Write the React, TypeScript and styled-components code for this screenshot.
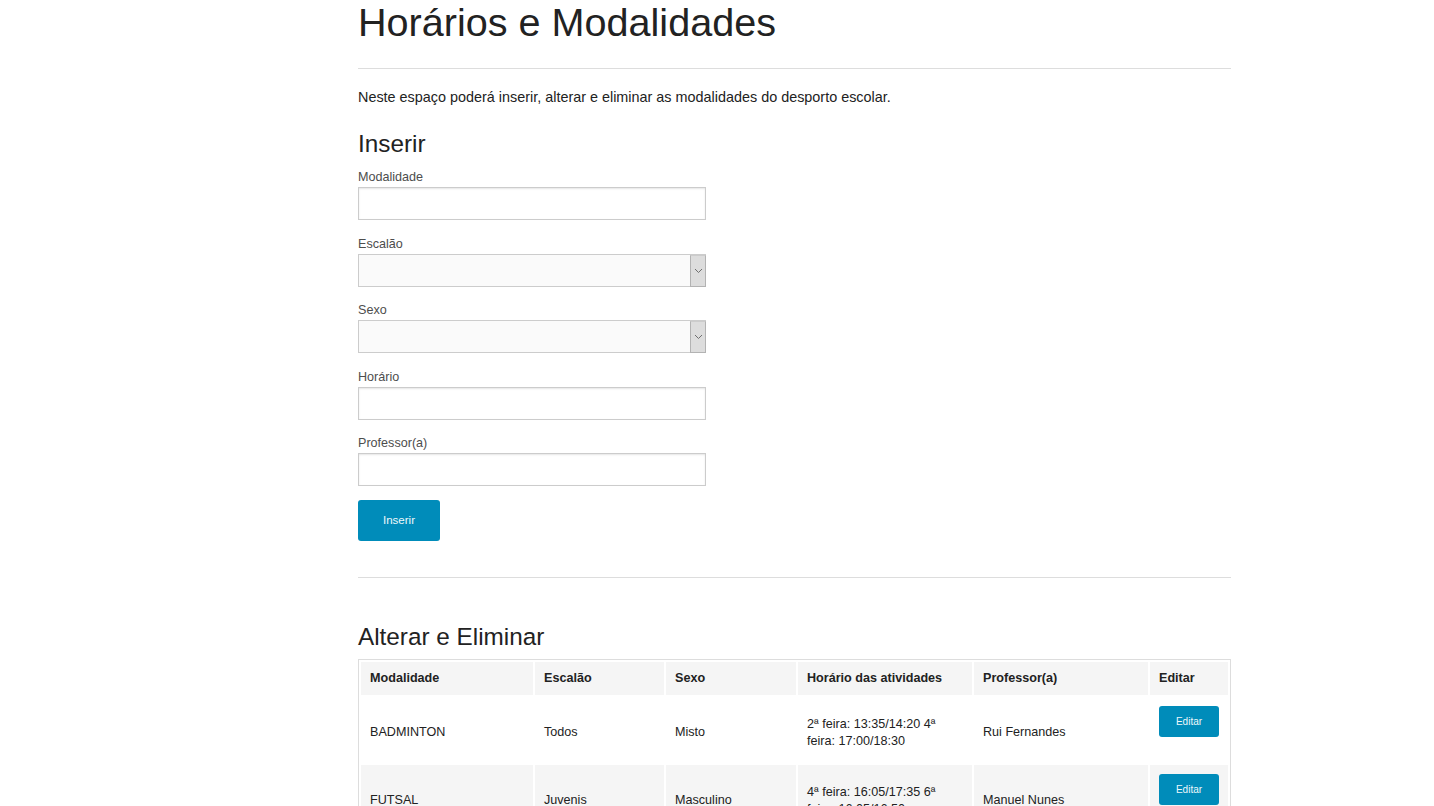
import React from "react";
import styled, { createGlobalStyle } from "styled-components";

const Global = createGlobalStyle`
  html, body { margin: 0; padding: 0; background: #fff; overflow: hidden; }
  body { font-family: "Liberation Sans", Arial, Helvetica, sans-serif; color: #222; }
  * { box-sizing: border-box; }
`;

const Page = styled.main`
  width: 873px;
  margin-left: 358px;
  display: flex;
  flex-direction: column;
`;

const Title = styled.h1`
  margin: -2px 0 0;
  font-size: 39.6px;
  line-height: 48px;
  font-weight: 400;
  color: #222;
`;

const Rule = styled.hr<{ $top: number; $bottom?: number }>`
  margin: ${(p) => p.$top}px 0 ${(p) => p.$bottom ?? 0}px;
  border: 0;
  border-top: 1px solid #ddd;
  height: 0;
`;

const Intro = styled.p`
  margin: 17px 0 0;
  font-size: 14.4px;
  line-height: 23px;
  color: #222;
`;

const SectionTitle = styled.h3<{ $top: number; $bottom: number }>`
  margin: ${(p) => p.$top}px 0 ${(p) => p.$bottom}px;
  font-size: 24.3px;
  line-height: 34px;
  font-weight: 400;
  color: #222;
`;

const Form = styled.form`
  width: 348px;
  display: flex;
  flex-direction: column;
  align-items: flex-start;
`;

const Field = styled.div`
  width: 100%;
  display: flex;
  flex-direction: column;
  margin-bottom: 14.5px;
`;

const Label = styled.label`
  display: block;
  font-size: 12.6px;
  line-height: 19px;
  color: #4d4d4d;
`;

const TextInput = styled.input`
  height: 33px;
  width: 100%;
  border: 1px solid #ccc;
  background: #fff;
  box-shadow: inset 0 1px 2px rgba(0, 0, 0, 0.1);
  padding: 0 8px;
  font-family: inherit;
  font-size: 12.6px;
  outline: none;
`;

const SelectBox = styled.div`
  height: 33px;
  display: flex;
  border: 1px solid #ccc;
  background: #fafafa;
`;

const SelectField = styled.select`
  flex: 1;
  appearance: none;
  -webkit-appearance: none;
  border: 0;
  background: transparent;
  font-family: inherit;
  font-size: 12.6px;
  outline: none;
`;

const ArrowBox = styled.span`
  width: 16px;
  margin: 0 -1px -1px 0;
  display: flex;
  align-items: center;
  justify-content: center;
  background: #ddd;
  border: 1px solid #b3b3b3;
  border-top-color: #ccc;
`;

const Button = styled.button<{ $small?: boolean }>`
  display: inline-flex;
  align-items: center;
  justify-content: center;
  width: ${(p) => (p.$small ? 60 : 82)}px;
  height: ${(p) => (p.$small ? 31 : 41)}px;
  border: 0;
  border-radius: 3px;
  background: #008cba;
  color: #eef8fb;
  font-family: inherit;
  font-size: ${(p) => (p.$small ? 10 : 11.5)}px;
  padding: 0;
  cursor: pointer;
`;

const SubmitButton = styled(Button)`
  margin-top: -1px;
`;

const Table = styled.table`
  width: 873px;
  table-layout: fixed;
  border-collapse: separate;
  border-spacing: 2px;
  border: 1px solid #ddd;
  font-size: 12.6px;
  color: #222;
`;

const Th = styled.th`
  background: #f5f5f5;
  text-align: left;
  font-weight: 700;
  padding: 9px 10px 9px 9px;
  line-height: 15px;
  color: #222;
`;

const Row = styled.tr<{ $alt?: boolean }>`
  background: ${(p) => (p.$alt ? "#f5f5f5" : "#fff")};
`;

const Td = styled.td`
  padding: 12px 10px 6px 9px;
  line-height: 17px;
  vertical-align: middle;
`;

const ButtonCell = styled(Td)`
  padding: 9px 10px 9px 9px;
  & > button {
    margin-bottom: 17px;
    display: flex;
  }
`;

const Chevron = () => (
  <svg width="9" height="6" viewBox="0 0 9 6" fill="none">
    <path d="M1 1 L4.5 4.5 L8 1" stroke="#6f6f6f" strokeWidth="1" />
  </svg>
);

const rows = [
  {
    mod: "BADMINTON",
    esc: "Todos",
    sexo: "Misto",
    hor: "2ª feira: 13:35/14:20 4ª feira: 17:00/18:30",
    prof: "Rui Fernandes",
  },
  {
    mod: "FUTSAL",
    esc: "Juvenis",
    sexo: "Masculino",
    hor: "4ª feira: 16:05/17:35 6ª feira: 16:05/16:50",
    prof: "Manuel Nunes",
  },
  {
    mod: "VOLEIBOL",
    esc: "Iniciados",
    sexo: "Feminino",
    hor: "3ª feira: 13:35/15:05 5ª feira: 16:05/17:35",
    prof: "Ana Silva",
  },
];

export default function App() {
  return (
    <>
      <Global />
      <Page>
        <Title>Horários e Modalidades</Title>
        <Rule $top={22} />
        <Intro>Neste espaço poderá inserir, alterar e eliminar as modalidades do desporto escolar.</Intro>
        <SectionTitle $top={18} $bottom={7}>Inserir</SectionTitle>
        <Form onSubmit={(e) => e.preventDefault()}>
          <Field>
            <Label>Modalidade</Label>
            <TextInput type="text" />
          </Field>
          <Field>
            <Label>Escalão</Label>
            <SelectBox>
              <SelectField defaultValue="">
                <option value=""></option>
              </SelectField>
              <ArrowBox>
                <Chevron />
              </ArrowBox>
            </SelectBox>
          </Field>
          <Field>
            <Label>Sexo</Label>
            <SelectBox>
              <SelectField defaultValue="">
                <option value=""></option>
              </SelectField>
              <ArrowBox>
                <Chevron />
              </ArrowBox>
            </SelectBox>
          </Field>
          <Field>
            <Label>Horário</Label>
            <TextInput type="text" />
          </Field>
          <Field>
            <Label>Professor(a)</Label>
            <TextInput type="text" />
          </Field>
          <SubmitButton type="submit">Inserir</SubmitButton>
        </Form>
        <Rule $top={36} />
        <SectionTitle $top={42} $bottom={5}>Alterar e Eliminar</SectionTitle>
        <Table>
          <colgroup>
            <col style={{ width: 172 }} />
            <col style={{ width: 129 }} />
            <col style={{ width: 130 }} />
            <col style={{ width: 174 }} />
            <col style={{ width: 174 }} />
            <col style={{ width: 78 }} />
          </colgroup>
          <thead>
            <tr>
              <Th>Modalidade</Th>
              <Th>Escalão</Th>
              <Th>Sexo</Th>
              <Th>Horário das atividades</Th>
              <Th>Professor(a)</Th>
              <Th>Editar</Th>
            </tr>
          </thead>
          <tbody>
            {rows.map((r, i) => (
              <Row key={r.mod} $alt={i % 2 === 1}>
                <Td>{r.mod}</Td>
                <Td>{r.esc}</Td>
                <Td>{r.sexo}</Td>
                <Td>{r.hor}</Td>
                <Td>{r.prof}</Td>
                <ButtonCell>
                  <Button $small type="button">Editar</Button>
                </ButtonCell>
              </Row>
            ))}
          </tbody>
        </Table>
      </Page>
    </>
  );
}
